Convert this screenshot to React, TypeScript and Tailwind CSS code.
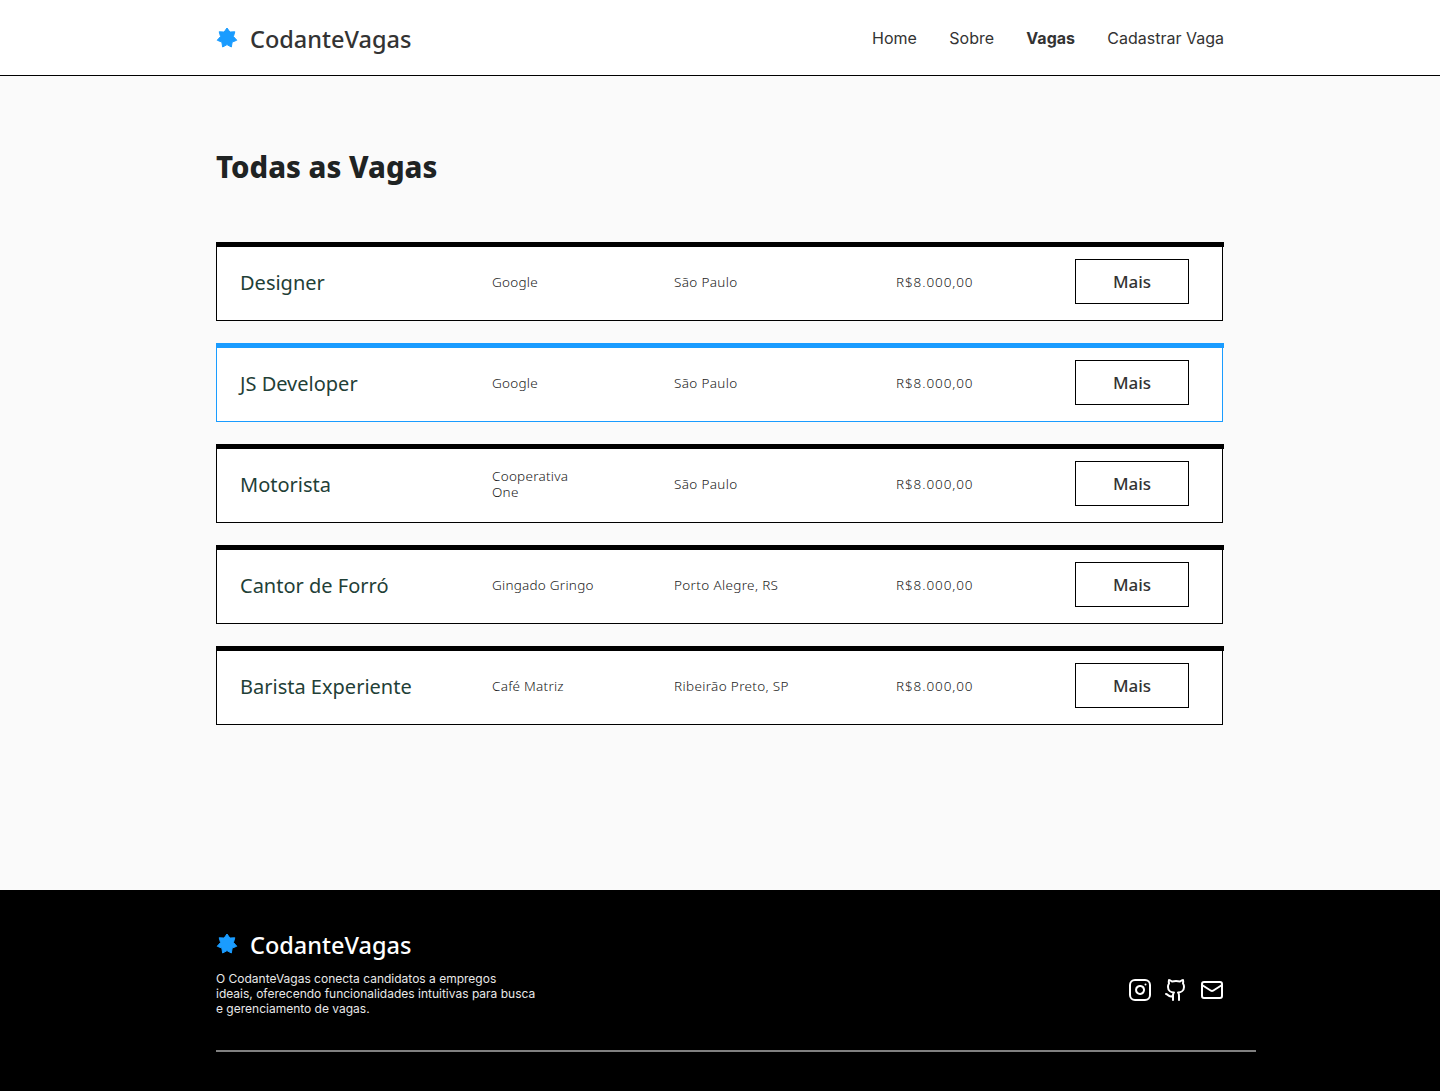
import { Github, Instagram, Mail } from 'lucide-react'

type Job = {
  title: string,
  company: string,
  city: string,
  salary: string,
  active?: boolean,
}

const jobs: Array<Job> = [
  { title: 'Designer', company: 'Google', city: 'São Paulo', salary: 'R$8.000,00' },
  { title: 'JS Developer', company: 'Google', city: 'São Paulo', salary: 'R$8.000,00', active: true },
  { title: 'Motorista', company: 'Cooperativa One', city: 'São Paulo', salary: 'R$8.000,00' },
  { title: 'Cantor de Forró', company: 'Gingado Gringo', city: 'Porto Alegre, RS', salary: 'R$8.000,00' },
  { title: 'Barista Experiente', company: 'Café Matriz', city: 'Ribeirão Preto, SP', salary: 'R$8.000,00' },
]

// seven pointed star of the logo
const starPoints = Array.from({ length: 14 }, (_, i) => {
  const radius = i % 2 === 0 ? 10 : 6.6
  const angle = (i * Math.PI) / 7
  return `${(11 + radius * Math.sin(angle)).toFixed(2)},${(11 - radius * Math.cos(angle)).toFixed(2)}`
}).join(' ')

const Logo = ({ dark }: { dark?: boolean }) => (
  <div className="flex items-center gap-[12px]">
    <svg width="22" height="22" viewBox="0 0 22 22">
      <polygon fill="#1a9cff" stroke="#1a9cff" strokeWidth="1" strokeLinejoin="round" points={starPoints} />
    </svg>
    <span className={`pt-[4px] font-['Noto_Sans',sans-serif] text-[23.5px] font-medium leading-none ${dark ? 'text-white' : 'text-[#333333]'}`}>
      CodanteVagas
    </span>
  </div>
)

const JobCard = ({ title, company, city, salary, active }: Job) => (
  <div className="flex flex-col">
    <div className={`h-[5px] w-full ${active ? 'bg-[#1a9cff]' : 'bg-black'}`} />
    <div className={`flex h-[74px] w-[1007px] items-center border-x border-b bg-white pl-[23px] ${active ? 'border-[#1a9cff]' : 'border-black'}`}>
      <h2 className="w-[252px] pb-[2px] font-['Noto_Sans',sans-serif] text-[20px] text-[#1f4037]">{title}</h2>
      <p className="w-[182px] pr-[80px] pb-[4px] font-['Noto_Sans',sans-serif] text-[13.5px] font-light leading-[16px] tracking-[0.25px] text-[#1a1a1a]">{company}</p>
      <p className="w-[222px] pb-[2px] font-['Noto_Sans',sans-serif] text-[13.5px] font-light tracking-[0.35px] text-[#1a1a1a]">{city}</p>
      <p className="w-[179px] pb-[2px] font-['Noto_Sans',sans-serif] text-[13.5px] font-light tracking-[0.9px] text-[#1a1a1a]">{salary}</p>
      <button className="-mt-[5px] h-[45px] w-[114px] border border-black pt-[2px] font-['Noto_Sans',sans-serif] text-[17px] font-medium text-[#333333]">Mais</button>
    </div>
  </div>
)

const App = () => (
  <div className="flex min-h-[1091px] flex-col bg-[#fafafa] font-['Inter',sans-serif]">
    <header className="h-[76px] border-b border-black bg-white">
      <div className="mx-auto flex h-full w-[1008px] items-center justify-between">
        <Logo />
        <nav className="flex gap-[32.33px] text-[16px] text-[#333333]">
          <a>Home</a>
          <a>Sobre</a>
          <a className="font-bold">Vagas</a>
          <a>Cadastrar Vaga</a>
        </nav>
      </div>
    </header>

    <main className="mx-auto h-[814px] w-[1008px] pt-[72px]">
      <h1 className="font-['Noto_Sans',sans-serif] text-[29.3px] font-extrabold leading-[38px] text-[#1f2323]">Todas as Vagas</h1>
      <div className="mt-[56px] flex flex-col gap-[22px]">
        {jobs.map((job) => (
          <JobCard key={job.title} {...job} />
        ))}
      </div>
    </main>

    <footer className="h-[201px] bg-black text-white">
      <div className="mx-[216px] pt-[40px]">
        <Logo dark />
        <div className="mt-[13px] flex w-[1008px] items-center justify-between">
          <p className="text-[12px] leading-[15px] text-[#e8e8e8]">
            O CodanteVagas conecta candidatos a empregos<br />
            ideais, oferecendo funcionalidades intuitivas para busca<br />
            e gerenciamento de vagas.
          </p>
          <div className="mb-[6px] flex gap-[12px]">
            <Instagram size={24} />
            <Github size={24} />
            <Mail size={24} />
          </div>
        </div>
        <div className="mt-[34px] h-[2px] w-[1040px] bg-[#808080]" />
      </div>
    </footer>
  </div>
)

export default App
